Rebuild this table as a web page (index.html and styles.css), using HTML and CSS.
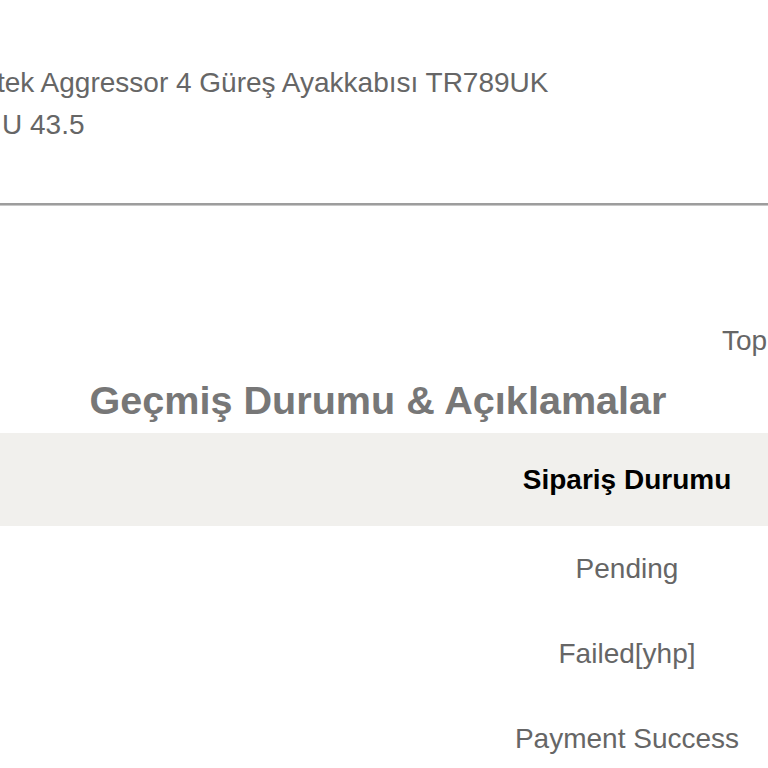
FILE: index.html
```html
<!DOCTYPE html>
<html lang="tr">
<head>
    <meta charset="UTF-8">
    <meta name="viewport" content="width=device-width, initial-scale=1.0">
    <link rel="stylesheet" href="styles.css">
</head>
<body>
    <div id="order">
        <div class="product">
            <div class="product-name">tek Aggressor 4 Güreş Ayakkabısı TR789UK</div>
            <div class="product-size">U 43.5</div>
        </div>

        <hr class="divider">

        <div class="totals">Toplam Tutar</div>

        <h2 class="history-title">Geçmiş Durumu &amp; Açıklamalar</h2>

        <div class="history">
            <div class="history-head">
                <div class="cell"></div>
                <div class="cell">Sipariş Durumu</div>
            </div>
            <div class="history-row">
                <div class="cell"></div>
                <div class="cell">Pending</div>
            </div>
            <div class="history-row">
                <div class="cell"></div>
                <div class="cell">Failed[yhp]</div>
            </div>
            <div class="history-row">
                <div class="cell"></div>
                <div class="cell">Payment Success</div>
            </div>
        </div>
    </div>
</body>
</html>
```

FILE: styles.css
```css
body {
    margin: 0;
    font-family: "Liberation Sans", Arial, sans-serif;
    color: #666;
    background-color: #fff;
    overflow: hidden;
}

#order {
    width: 768px;
}

.product {
    padding-top: 62px;
    font-size: 28px;
    line-height: 42px;
}

.product-name {
    margin-left: -3px;
    white-space: nowrap;
}

.product-size {
    padding-left: 2px;
}

.divider {
    margin: 57px 0 0;
    border: 0;
    border-top: 2px solid #9d9d9d;
    border-bottom: 1px solid #c8c8c8;
}

.totals {
    margin-top: 119px;
    padding-left: 722px;
    font-size: 28px;
    line-height: 32px;
    white-space: nowrap;
}

.history-title {
    margin: 20px 0 10px;
    padding-right: 12px;
    text-align: center;
    font-size: 39.6px;
    line-height: 46px;
    color: #777;
}

.history-head,
.history-row {
    display: grid;
    grid-template-columns: 486px 282px;
    align-items: center;
}

.history-head {
    height: 93px;
    background-color: #f1f0ed;
    color: #000;
    font-weight: bold;
    font-size: 28px;
}

.history-row {
    height: 85px;
    font-size: 28px;
}

.cell {
    text-align: center;
    white-space: nowrap;
}
```
